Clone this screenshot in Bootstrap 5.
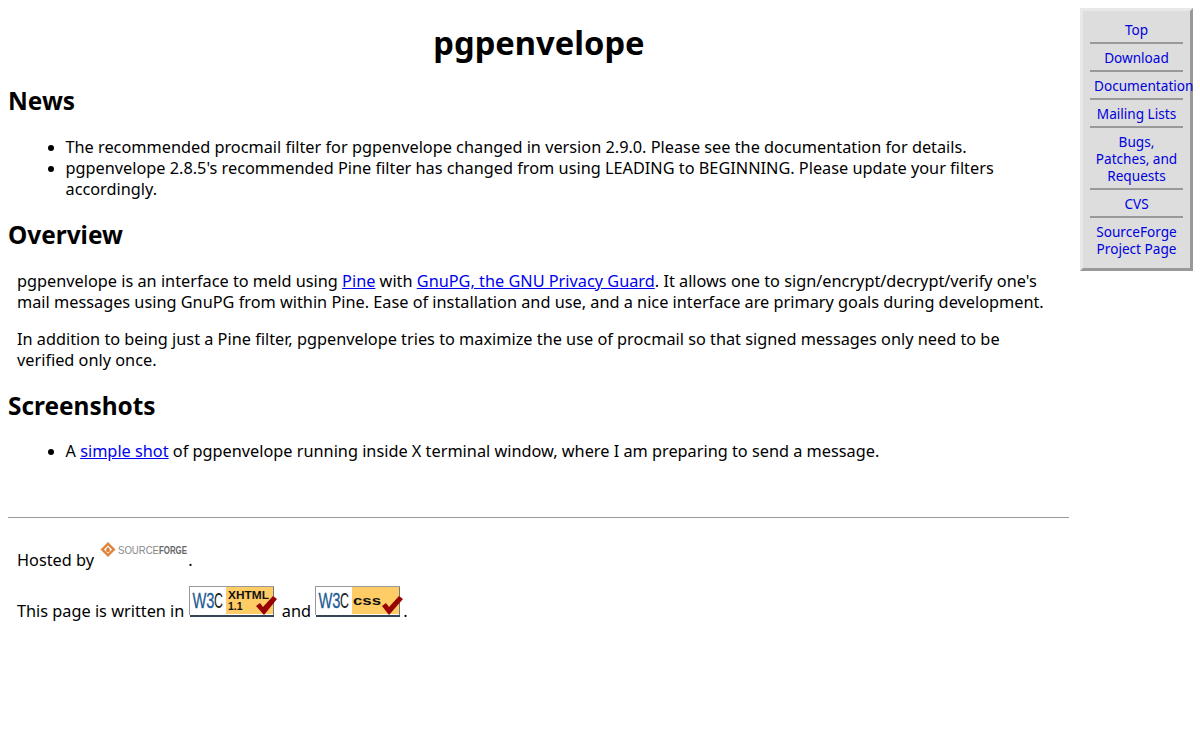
<!DOCTYPE html>
<html lang="en">
<head>
<meta charset="utf-8">
<title>pgpenvelope</title>
<link href="https://cdn.jsdelivr.net/npm/bootstrap@5.3.0/dist/css/bootstrap.min.css" rel="stylesheet">
<style>
body{font-family:"Noto Sans","Open Sans",sans-serif;font-size:16.3px;line-height:21px;color:#000;background:#fff;margin:0}
a{color:#00e}
.pg-main{width:1061px;margin-left:8px;flex:none}
.pg-title{font-size:32.7px;line-height:48px;font-weight:700;text-align:center;margin:19px 0 0;padding-left:1px}
.pg-h{font-size:24.4px;line-height:33px;font-weight:700;margin:18px 0 0}
.pg-h.news{margin-top:17px}
.pg-list{margin:20px 0 0;padding-left:57.5px}
.pg-list.l2{margin-top:19px}
.pg-indent{margin:16px 9px 0 9px}
.pg-indent.p1{margin-top:20px}
.pg-indent.f1{margin-top:17px}
.pg-indent.f2{margin-top:15px}
.pg-rule{border:0;border-top:1px solid #999;opacity:1;margin:55px 0 0}
.pg-side{width:113px;height:263px;margin:8px 0 0 11px;background:#ddd;border:3px solid;border-color:#e8e8e8 #999 #999 #e8e8e8;font-size:13.6px;line-height:17px;text-align:center;flex:none;padding:5px 7px 0}
.pg-side a{display:block;text-decoration:none;padding:4.500px 4px;border-bottom:2px solid #999;color:#00d;white-space:nowrap}
.pg-side a:last-child{border-bottom:0}
.pg-badge{display:inline-block;vertical-align:baseline}
.f1 .pg-badge{margin-left:2px}
.pg-badge.xh{margin-right:1px}
</style>
</head>
<body>
<div class="d-flex align-items-start">
<div class="pg-main">
<h1 class="pg-title">pgpenvelope</h1>
<h2 class="pg-h news">News</h2>
<ul class="pg-list l1">
<li>The recommended procmail filter for pgpenvelope changed in version 2.9.0. Please see the documentation for details.</li>
<li>pgpenvelope 2.8.5's recommended Pine filter has changed from using LEADING to BEGINNING. Please update your filters accordingly.</li>
</ul>
<h2 class="pg-h ov">Overview</h2>
<p class="pg-indent p1">pgpenvelope is an interface to meld using <a href="#">Pine</a> with <a href="#">GnuPG, the GNU Privacy Guard</a>. It allows one to sign/encrypt/decrypt/verify one's mail messages using GnuPG from within Pine. Ease of installation and use, and a nice interface are primary goals during development.</p>
<p class="pg-indent p2">In addition to being just a Pine filter, pgpenvelope tries to maximize the use of procmail so that signed messages only need to be verified only once.</p>
<h2 class="pg-h sc">Screenshots</h2>
<ul class="pg-list l2"><li>A <a href="#">simple shot</a> of pgpenvelope running inside X terminal window, where I am preparing to send a message.</li></ul>
<hr class="pg-rule">
<p class="pg-indent f1">Hosted by <svg class="pg-badge" width="88" height="31" viewBox="0 0 88 31"><g transform="translate(0 7)"><path d="M8 0L15.500 7.500 8 15 .5 7.500z" fill="#e0843a"/><path d="M8 3.500L12 7.500 8 11.500 4 7.500z" fill="#fff"/><path d="M8 5c1.300 1.500 2 2.300 2 3.200a2 2 0 0 1-4 0c0-.9.700-1.700 2-3.200z" fill="#e0843a"/></g><text x="18" y="19" font-family="Liberation Sans" font-size="11.500" fill="#888" textLength="41" lengthAdjust="spacingAndGlyphs">SOURCE</text><text x="59" y="19" font-family="Liberation Sans" font-size="11.500" font-weight="700" fill="#666" textLength="28" lengthAdjust="spacingAndGlyphs">FORGE</text></svg>.</p>
<p class="pg-indent f2">This page is written in <svg class="pg-badge xh" width="88" height="31" viewBox="0 0 88 31"><path d="M0 0H85V29H0z" fill="#fff"/><path d="M0 0H85V1H1V29H0z" fill="#999"/><path d="M1 29H85V31H1z" fill="#345"/><path d="M37 1H84V28H37z" fill="#fc6"/><path d="M84 1h1v28h-1z" fill="#777"/><text x="3.500" y="22" font-family="Liberation Sans" font-size="22" fill="#1c5a96" stroke="#1c5a96" stroke-width=".3" textLength="22" lengthAdjust="spacingAndGlyphs">W3</text><text x="25" y="22" font-family="Liberation Sans" font-size="22" fill="#222" textLength="9" lengthAdjust="spacingAndGlyphs">C</text><text x="39" y="13" font-family="Liberation Sans" font-size="10" font-weight="700" fill="#111" textLength="41" lengthAdjust="spacingAndGlyphs">XHTML</text><text x="39" y="24" font-family="Liberation Sans" font-size="10.500" font-weight="700" fill="#111">1.1</text><path d="M67 20l4-3 3 4 10-11 4 3-13 16z" fill="#900"/></svg> and <svg class="pg-badge" width="88" height="31" viewBox="0 0 88 31"><path d="M0 0H85V29H0z" fill="#fff"/><path d="M0 0H85V1H1V29H0z" fill="#999"/><path d="M1 29H85V31H1z" fill="#345"/><path d="M37 1H84V28H37z" fill="#fc6"/><path d="M84 1h1v28h-1z" fill="#777"/><text x="3.500" y="22" font-family="Liberation Sans" font-size="22" fill="#1c5a96" stroke="#1c5a96" stroke-width=".3" textLength="22" lengthAdjust="spacingAndGlyphs">W3</text><text x="25" y="22" font-family="Liberation Sans" font-size="22" fill="#222" textLength="9" lengthAdjust="spacingAndGlyphs">C</text><text x="38" y="19" font-family="Liberation Sans" font-size="12" font-weight="700" fill="#111" textLength="28" lengthAdjust="spacingAndGlyphs">css</text><path d="M67 20l4-3 3 4 10-11 4 3-14 16z" fill="#900"/></svg>.</p>
</div>
<nav class="pg-side">
<a href="#">Top</a><a href="#">Download</a><a href="#">Documentation</a><a href="#">Mailing Lists</a><a href="#">Bugs,<br>Patches, and<br>Requests</a><a href="#">CVS</a><a href="#">SourceForge<br>Project Page</a>
</nav>
</div>
</body>
</html>
